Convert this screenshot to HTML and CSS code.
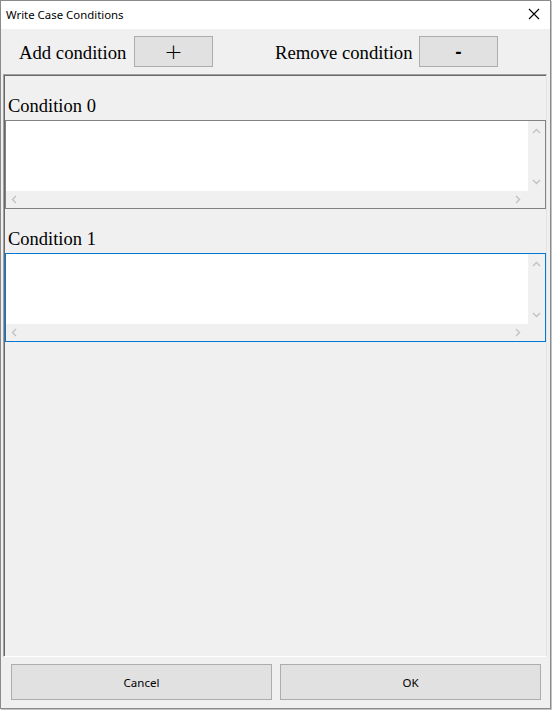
FILE: index.html
```html
<!DOCTYPE html>
<html>
<head>
<meta charset="utf-8">
<link rel="stylesheet" href="styles.css">
</head>
<body>
<div class="window">
  <div class="titlebar">
    <span class="title">Write Case Conditions</span>
    <svg class="close" width="12" height="12" viewBox="0 0 12 12"><path d="M1 1 L11 11 M11 1 L1 11" stroke="#000" stroke-width="1.1"/></svg>
  </div>
  <div class="toolbar">
    <span class="tlabel">Add condition</span>
    <button class="tbtn plus">+</button>
    <span></span>
    <span class="tlabel">Remove condition</span>
    <button class="tbtn minus">-</button>
  </div>
  <div class="panel">
    <div class="cond">
      <div class="clabel">Condition 0</div>
      <div class="textbox">
        <div class="area"></div>
        <div class="vscroll">
          <svg width="9" height="6" viewBox="0 0 9 6"><path d="M1 5 L4.5 1.5 L8 5" fill="none" stroke="#c2c2c2" stroke-width="1.4"/></svg>
          <svg width="9" height="6" viewBox="0 0 9 6"><path d="M1 1 L4.5 4.5 L8 1" fill="none" stroke="#c2c2c2" stroke-width="1.4"/></svg>
        </div>
        <div class="hscroll">
          <svg width="6" height="9" viewBox="0 0 6 9"><path d="M5 1 L1.5 4.5 L5 8" fill="none" stroke="#c2c2c2" stroke-width="1.4"/></svg>
          <svg width="6" height="9" viewBox="0 0 6 9"><path d="M1 1 L4.5 4.5 L1 8" fill="none" stroke="#c2c2c2" stroke-width="1.4"/></svg>
        </div>
        <div class="corner"></div>
      </div>
    </div>
    <div class="cond">
      <div class="clabel">Condition 1</div>
      <div class="textbox focused">
        <div class="area"></div>
        <div class="vscroll">
          <svg width="9" height="6" viewBox="0 0 9 6"><path d="M1 5 L4.5 1.5 L8 5" fill="none" stroke="#c2c2c2" stroke-width="1.4"/></svg>
          <svg width="9" height="6" viewBox="0 0 9 6"><path d="M1 1 L4.5 4.5 L8 1" fill="none" stroke="#c2c2c2" stroke-width="1.4"/></svg>
        </div>
        <div class="hscroll">
          <svg width="6" height="9" viewBox="0 0 6 9"><path d="M5 1 L1.5 4.5 L5 8" fill="none" stroke="#c2c2c2" stroke-width="1.4"/></svg>
          <svg width="6" height="9" viewBox="0 0 6 9"><path d="M1 1 L4.5 4.5 L1 8" fill="none" stroke="#c2c2c2" stroke-width="1.4"/></svg>
        </div>
        <div class="corner"></div>
      </div>
    </div>
  </div>
  <div class="footer">
    <button class="fbtn">Cancel</button>
    <button class="fbtn">OK</button>
  </div>
</div>
</body>
</html>
```

FILE: styles.css
```css
html, body {
  margin: 0;
  padding: 0;
  background: #ffffff;
}
body {
  width: 553px;
  height: 714px;
  overflow: hidden;
}
.window {
  box-sizing: border-box;
  width: 551px;
  height: 709px;
  border: 1px solid #8a8a8a;
  box-shadow: 1px 1px 0 #c4c4c4;
  background: #f0f0f0;
  display: flex;
  flex-direction: column;
}
.titlebar {
  height: 28px;
  background: #ffffff;
  display: flex;
  align-items: center;
  justify-content: space-between;
  padding: 0 10px 0 5px;
  flex: none;
}
.title {
  font-family: "Noto Sans", "Open Sans", sans-serif;
  font-size: 11.4px;
  color: #000;
  margin-top: -2px;
}
.close {
  display: block;
  margin-top: -2px;
}
.toolbar {
  height: 45px;
  flex: none;
  display: grid;
  grid-template-columns: 115px 79px 62px 144px 79px;
  align-items: center;
  padding-left: 18px;
}
.tlabel {
  font-family: "Liberation Serif", "Times New Roman", serif;
  font-size: 18.7px;
  color: #000;
  white-space: nowrap;
  margin-top: 3px;
}
.tbtn {
  box-sizing: border-box;
  height: 31px;
  width: 79px;
  margin: 0;
  padding: 0;
  background: #e1e1e1;
  border: 1px solid #adadad;
  color: #000;
  display: flex;
  align-items: center;
  justify-content: center;
}
.plus {
  font-family: "DejaVu Sans", sans-serif;
  font-weight: 200;
  font-size: 22px;
  line-height: 1;
}
.minus {
  font-family: "Liberation Sans", Arial, sans-serif;
  font-weight: bold;
  font-size: 19px;
  line-height: 1;
}
.panel {
  flex: 1;
  margin: 0 3px 0 2px;
  border-top: 1px solid #a0a0a0;
  border-left: 1px solid #a0a0a0;
  border-right: 1px solid #e3e3e3;
  border-bottom: 1px solid #ffffff;
  box-shadow: inset 1px 1px 0 #696969;
  padding: 1px 0 0 1px;
  display: flex;
  flex-direction: column;
}
.cond {
  display: flex;
  flex-direction: column;
}
.clabel {
  height: 44px;
  box-sizing: border-box;
  display: flex;
  align-items: flex-end;
  padding: 0 0 4px 3px;
  font-family: "Liberation Serif", "Times New Roman", serif;
  font-size: 18.5px;
  line-height: 20px;
  color: #000;
}
.textbox {
  box-sizing: border-box;
  height: 89px;
  border: 1px solid #828282;
  display: grid;
  grid-template-columns: 1fr 17px;
  grid-template-rows: 1fr 17px;
  background: #f0f0f0;
}
.textbox.focused {
  border-color: #0078d7;
}
.area {
  background: #ffffff;
}
.vscroll {
  background: #f0f0f0;
  display: flex;
  flex-direction: column;
  align-items: center;
  justify-content: space-between;
  padding: 7px 0 6px 0;
}
.vscroll svg, .hscroll svg {
  display: block;
}
.hscroll {
  background: #f0f0f0;
  display: flex;
  align-items: center;
  justify-content: space-between;
  padding: 0 7px 0 5px;
}
.corner {
  background: #f0f0f0;
}
.footer {
  flex: none;
  height: 51px;
  box-sizing: border-box;
  padding: 7px 9px 8px 10px;
  display: grid;
  grid-template-columns: 1fr 1fr;
  column-gap: 8px;
}
.fbtn {
  box-sizing: border-box;
  margin: 0;
  background: #e1e1e1;
  border: 1px solid #adadad;
  font-family: "Noto Sans", "Open Sans", sans-serif;
  font-size: 11.5px;
  color: #000;
  padding: 0;
}
```
